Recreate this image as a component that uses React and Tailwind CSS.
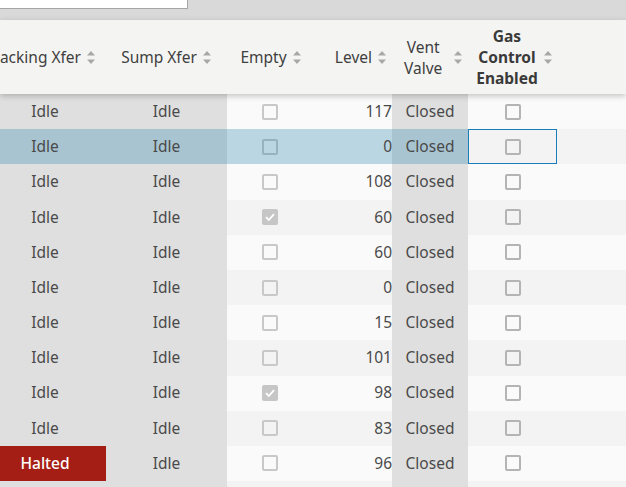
import React from 'react'

const rows = [
  { a: 'Idle', b: 'Idle', empty: false, level: 117 },
  { a: 'Idle', b: 'Idle', empty: false, level: 0, selected: true },
  { a: 'Idle', b: 'Idle', empty: false, level: 108 },
  { a: 'Idle', b: 'Idle', empty: true, level: 60 },
  { a: 'Idle', b: 'Idle', empty: false, level: 60 },
  { a: 'Idle', b: 'Idle', empty: false, level: 0 },
  { a: 'Idle', b: 'Idle', empty: false, level: 15 },
  { a: 'Idle', b: 'Idle', empty: false, level: 101 },
  { a: 'Idle', b: 'Idle', empty: true, level: 98 },
  { a: 'Idle', b: 'Idle', empty: false, level: 83 },
  { a: 'Halted', b: 'Idle', empty: false, level: 96 },
  { a: '', b: '', empty: null, level: '' },
]

function Sort() {
  return (
    <svg width="10" height="15" viewBox="0 0 10 15" className="shrink-0 ml-[5px]">
      <path d="M1 5.5 L5 1 L9 5.5 Z" fill="#a8a8a8" />
      <path d="M1 9.5 L5 14 L9 9.5 Z" fill="#a8a8a8" />
    </svg>
  )
}

function Box({ checked, tone = 'border-[#c8c8c8]' }) {
  if (checked) {
    return (
      <div className="w-[16px] h-[16px] rounded-[2px] bg-[#c6c6c6] flex items-center justify-center">
        <svg width="12" height="12" viewBox="0 0 12 12">
          <path d="M2 6.2 L4.8 9 L10 3.2" fill="none" stroke="#fff" strokeWidth="1.8" />
        </svg>
      </div>
    )
  }
  return <div className={`w-[16px] h-[16px] rounded-[2px] border-2 ${tone}`} />
}

export default function App() {
  return (
    <div className="w-[626px] h-[487px] overflow-hidden bg-[#fafafa] text-[15.5px] text-[#4a4a4a]" style={{ fontFamily: '"Noto Sans", "Open Sans", sans-serif' }}>
      <div className="h-[20px] bg-[#d9d9d9]">
        <div className="w-[188px] h-[9px] bg-white border-r border-b border-[#a6a6a6]" />
      </div>
      <div className="relative z-10 h-[74px] bg-[#f4f4f2] shadow-[0_2px_6px_rgba(0,0,0,0.22)] flex text-[#3f3f3f] pt-[1px]">
        <div className="w-[122px] -ml-[16px] shrink-0 flex items-center justify-end pr-[10px] whitespace-nowrap">Stacking Xfer<Sort /></div>
        <div className="w-[121px] shrink-0 flex items-center justify-center">Sump Xfer<Sort /></div>
        <div className="w-[86px] shrink-0 flex items-center justify-center pl-[2px]">Empty<Sort /></div>
        <div className="w-[79px] shrink-0 flex items-center justify-end pr-[5px]">Level<Sort /></div>
        <div className="w-[76px] shrink-0 flex items-center pl-[12px]">
          <span className="leading-[21px] text-center">Vent<br />Valve</span>
          <span className="ml-[6px]"><Sort /></span>
        </div>
        <div className="w-[89px] shrink-0 flex items-center justify-center pl-[4px] font-bold text-[#3a3a3a]">
          <span className="leading-[21px] text-center">Gas<br />Control<br />Enabled</span>
          <Sort />
        </div>
      </div>
      <div className="flex flex-col">
        {rows.map((r, i) => {
          const even = i % 2 === 1
          const base = even ? 'bg-[#f3f3f3]' : 'bg-[#fafafa]'
          const gray = r.selected ? 'bg-[#a8c4d1]' : 'bg-[#dfdfdf]'
          const light = r.selected ? 'bg-[#bad6e2]' : base
          const filler = r.empty === null
          return (
            <div key={i} className={`flex h-[35.2px] shrink-0 ${base}`}>
              <div className={`w-[122px] -ml-[16px] shrink-0 flex items-center justify-center ${r.a === 'Halted' ? 'bg-[#a51e15] text-white font-medium' : gray}`}>{r.a}</div>
              <div className={`w-[121px] shrink-0 flex items-center justify-center ${gray}`}>{r.b}</div>
              <div className={`w-[86px] shrink-0 flex items-center justify-center ${light}`}>
                {!filler && <Box checked={r.empty} tone={r.selected ? 'border-[#97b2bf]' : 'border-[#c8c8c8]'} />}
              </div>
              <div className={`w-[79px] shrink-0 flex items-center justify-end ${light}`}>{r.level}</div>
              <div className={`w-[76px] shrink-0 flex items-center justify-center ${gray}`}>{filler ? '' : 'Closed'}</div>
              <div className={`w-[89px] shrink-0 flex items-center justify-center ${r.selected ? 'bg-[#f3f3f3] border border-[#1a7db8]' : ''}`}>
                {!filler && <Box checked={false} tone="border-[#b4b4b4]" />}
              </div>
            </div>
          )
        })}
      </div>
    </div>
  )
}
